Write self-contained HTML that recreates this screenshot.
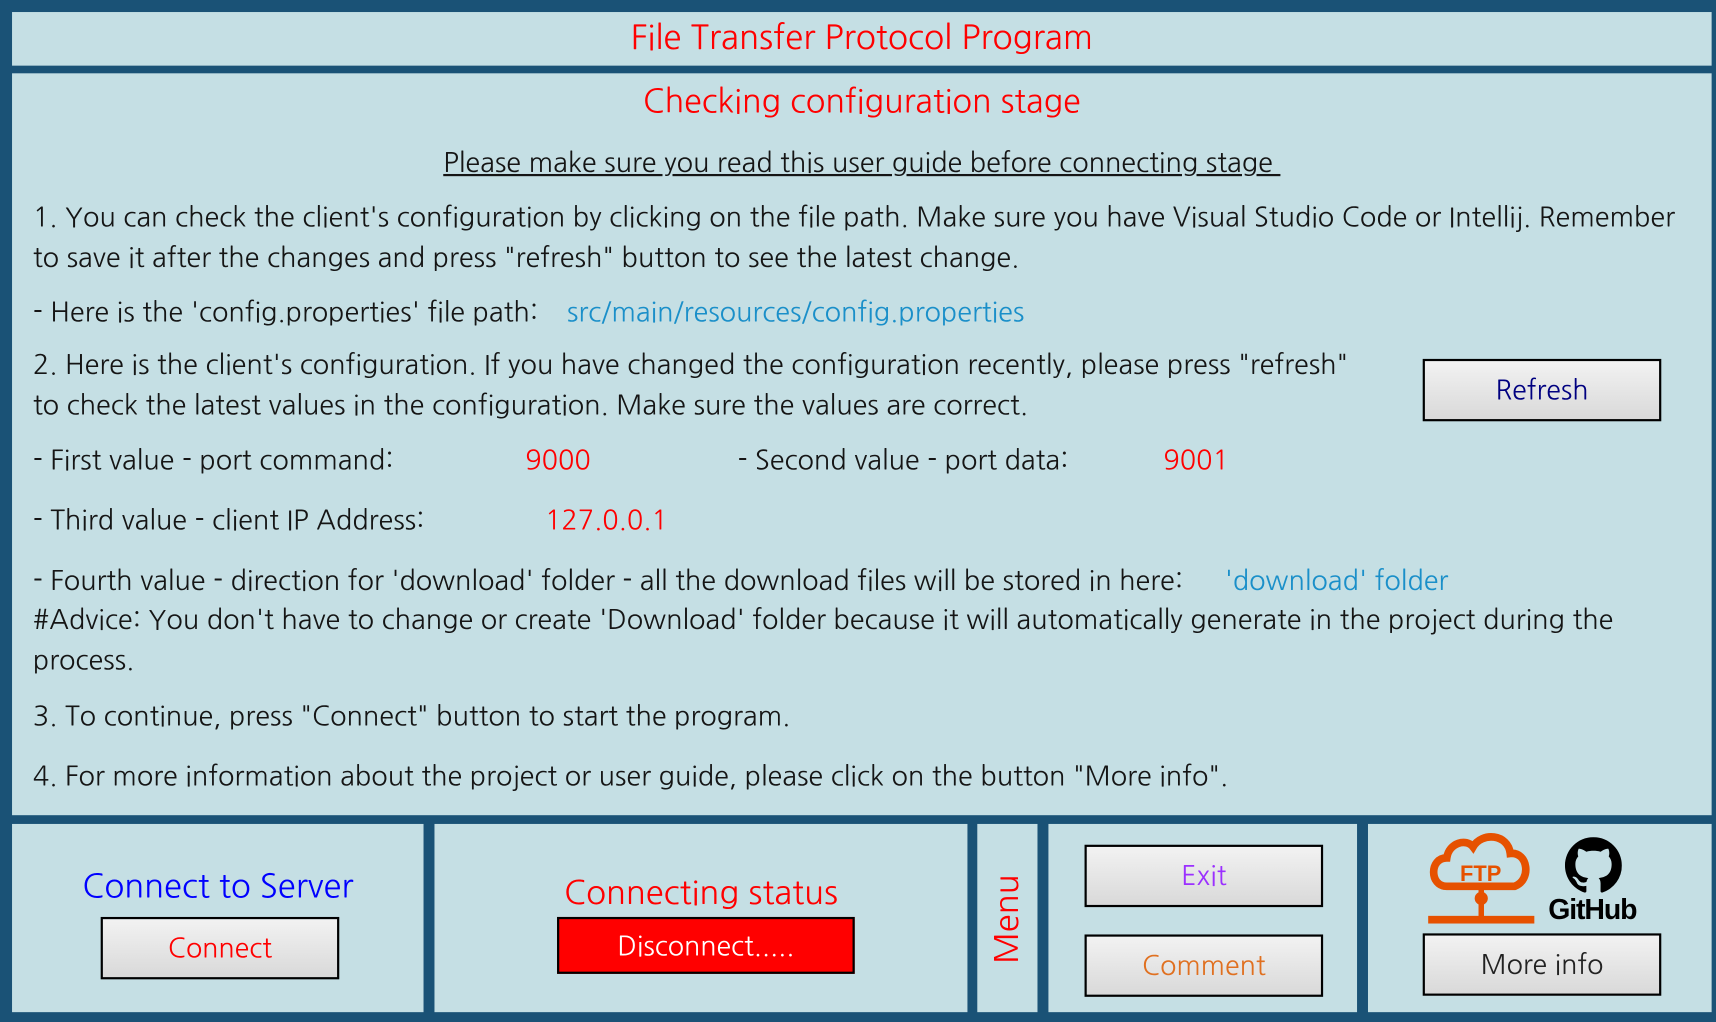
<!DOCTYPE html>
<html><head><meta charset="utf-8"><style>
html,body{margin:0;padding:0;width:1716px;height:1022px;overflow:hidden;background:#2a2a2a;}
#s{position:absolute;left:0;top:0;width:1568px;height:934px;transform-origin:0 0;transform:scale(1.09439,1.09422);background:#1a5276;font-family:"NanumGothic","Liberation Sans",sans-serif;}
.p{position:absolute;background:#c5dfe4;}
.t{position:absolute;white-space:nowrap;font-size:24.7px;color:#151515;line-height:1;}
.c{position:absolute;text-align:center;white-space:nowrap;line-height:1;}
.r{color:#ff0000}.b{color:#1a8fc9}
.btn{position:absolute;box-sizing:border-box;border:2px solid #000;background:linear-gradient(#f2f2f2,#d9d9d9);display:flex;align-items:center;justify-content:center;font-size:24.5px;}
</style></head><body><div id="s">
<div class="p" style="left:11px;top:11px;width:1553px;height:49px"></div>
<div class="p" style="left:11px;top:67px;width:1553px;height:678px"></div>
<div class="p" style="left:11px;top:753px;width:376px;height:172px"></div>
<div class="p" style="left:397px;top:753px;width:487px;height:172px"></div>
<div class="p" style="left:893px;top:753px;width:55px;height:172px"></div>
<div class="p" style="left:958px;top:753px;width:282px;height:172px"></div>
<div class="p" style="left:1250px;top:753px;width:314px;height:172px"></div>

<div class="c r" style="left:11px;width:1553px;top:20px;font-size:30.3px">File Transfer Protocol Program</div>
<div class="c r" style="left:11px;width:1553px;top:79px;font-size:29.5px">Checking configuration stage</div>
<div class="c" style="left:11px;width:1553px;top:137px;font-size:24.7px;color:#151515"><span style="text-decoration:underline">Please make sure you read this user guide before connecting stage&nbsp;</span></div>

<div class="t" style="left:30px;top:187px">1. You can check the client's configuration by clicking on the file path. Make sure you have Visual Studio Code or Intellij. Remember</div>
<div class="t" style="left:30px;top:224px">to save it after the changes and press "refresh" button to see the latest change.</div>
<div class="t" style="left:30px;top:274px">- Here is the 'config.properties' file path:</div>
<div class="t b" style="left:518px;top:274px">src/main/resources/config.properties</div>
<div class="t" style="left:30px;top:322px">2. Here is the client's configuration. If you have changed the configuration recently, please press "refresh"</div>
<div class="t" style="left:30px;top:359px">to check the latest values in the configuration. Make sure the values are correct.</div>
<div class="t" style="left:30px;top:409px">- First value - port command:</div>
<div class="t r" style="left:480px;top:409px">9000</div>
<div class="t" style="left:674px;top:409px">- Second value - port data:</div>
<div class="t r" style="left:1063px;top:409px">9001</div>
<div class="t" style="left:30px;top:464px">- Third value - client IP Address:</div>
<div class="t r" style="left:498px;top:464px">127.0.0.1</div>
<div class="t" style="left:30px;top:519px">- Fourth value - direction for 'download' folder - all the download files will be stored in here:</div>
<div class="t b" style="left:1119px;top:519px">'download' folder</div>
<div class="t" style="left:30px;top:555px">#Advice: You don't have to change or create 'Download' folder because it will automatically generate in the project during the</div>
<div class="t" style="left:30px;top:592px">process.</div>
<div class="t" style="left:30px;top:643px">3. To continue, press "Connect" button to start the program.</div>
<div class="t" style="left:30px;top:698px">4. For more information about the project or user guide, please click on the button "More info".</div>

<div class="btn" style="left:1300px;top:328px;width:218px;height:57px;color:#000080">Refresh</div>

<div class="c" style="left:11px;width:376px;top:795px;font-size:30px;color:#0000ff">Connect to Server</div>
<div class="btn" style="left:92px;top:838px;width:218px;height:57px;color:#ff0000">Connect</div>
<div class="c r" style="left:397px;width:487px;top:801px;font-size:30px">Connecting status</div>
<div class="btn" style="left:509px;top:838px;width:272px;height:52px;background:#ff0000;color:#fff">Disconnect.....</div>
<div class="c r" style="left:880px;width:80px;top:826px;font-size:30px;transform:rotate(-90deg)">Menu</div>
<div class="btn" style="left:991px;top:772px;width:218px;height:57px;color:#9b30ff">Exit</div>
<div class="btn" style="left:991px;top:854px;width:218px;height:57px;color:#e07020">Comment</div>
<div class="btn" style="left:1300px;top:853px;width:218px;height:57px;color:#222">More info</div>

<svg style="position:absolute;left:1300px;top:758px" width="110" height="90" viewBox="0 0 110 90">
<path d="M22 52 C6 52 6 26 22 26 C24 12 40 8 46 16 C54 2 78 4 80 22 C96 20 100 46 84 52 Z" fill="none" stroke="#e65100" stroke-width="7"/>
<text x="53" y="47" text-anchor="middle" font-family="Liberation Sans" font-weight="bold" font-size="20" fill="#e65100">FTP</text>
<rect x="51" y="55" width="5" height="26" fill="#e65100"/><circle cx="53.5" cy="63" r="6" fill="#e65100"/>
<rect x="5" y="79" width="97" height="7" fill="#e65100"/>
</svg>
<svg style="position:absolute;left:1430px;top:765px" width="52" height="52" viewBox="0 0 16 16">
<path fill="#000" d="M8 0C3.58 0 0 3.58 0 8c0 3.54 2.290 6.530 5.470 7.590.4.07.55-.17.55-.38 0-.19-.01-.82-.01-1.49-2.01.37-2.53-.49-2.69-.94-.09-.23-.48-.94-.82-1.130-.28-.15-.68-.52-.01-.53.63-.01 1.08.58 1.23.82.72 1.21 1.87.87 2.33.66.07-.52.28-.87.51-1.07-1.78-.2-3.64-.89-3.64-3.95 0-.87.31-1.59.82-2.15-.08-.2-.36-1.02.08-2.12 0 0 .67-.21 2.2.82.64-.18 1.32-.27 2-.27.68 0 1.36.09 2 .27 1.53-1.04 2.2-.82 2.2-.82.44 1.1.16 1.92.08 2.12.51.56.82 1.27.82 2.15 0 3.07-1.87 3.75-3.65 3.95.29.25.54.73.54 1.48 0 1.07-.01 1.93-.01 2.2 0 .21.15.46.55.38A8.013 8.013 0 0016 8c0-4.42-3.58-8-8-8z"/>
</svg>
<div class="c" style="left:1410px;width:90px;top:818px;font-size:26px;font-weight:bold;font-family:'Liberation Sans',sans-serif;color:#000;letter-spacing:-1px">GitHub</div>
</div></body></html>
